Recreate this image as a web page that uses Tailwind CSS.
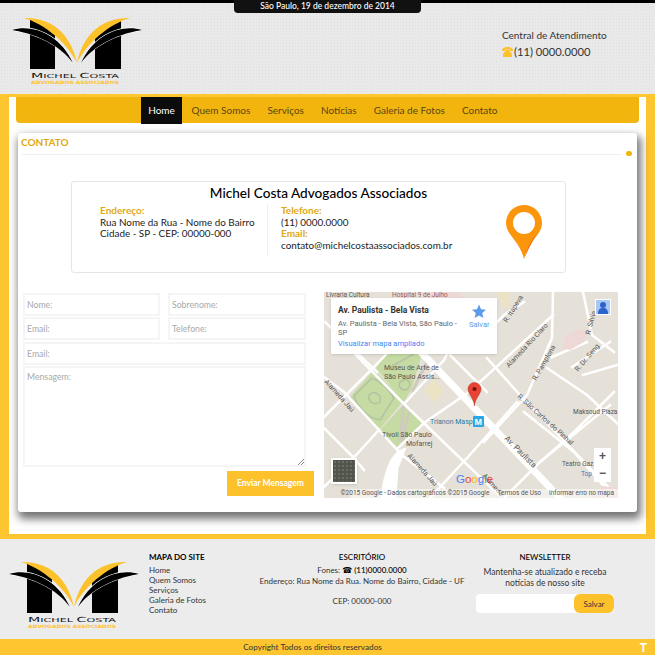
<!DOCTYPE html>
<html lang="pt-BR">
<head>
<meta charset="utf-8">
<title>Michel Costa Advogados Associados</title>
<script src="https://cdn.jsdelivr.net/npm/@tailwindcss/browser@4"></script>
</head>
<body class="m-0">
<div class="w-[655px] h-[655px] overflow-hidden font-['Lato',sans-serif] text-[#333] bg-white">

  <!-- Header -->
  <header class="relative h-[94px] bg-[#e9e9e9] bg-[radial-gradient(#e0e0e0_1px,transparent_1px)] bg-[size:3px_3px] border-t-[3px] border-black">
    <div class="absolute left-[234px] top-[-3px] w-[187px] h-[13px] bg-[#111] rounded-b-[4px] text-white text-[8.5px] font-medium leading-[12px] text-center">São Paulo, 19 de dezembro de 2014</div>
    <div class="flex justify-between">
      <svg class="ml-[12px] mt-[14px] w-[130px] h-[68px]" viewBox="0 0 130 68">
        <path d="M18 2 C28 4 37 10 43 17 V52 H18Z" fill="#000"/>
        <path d="M109 2 C99 4 90 10 83 17 V52 H109Z" fill="#000"/>
        <path d="M0 13 C20 7 48 17 61 46 C50 31 30 18 0 13Z" fill="#000" stroke="#fff" stroke-width="1.200"/>
        <path d="M130 13 C110 7 82 17 69 46 C80 31 100 18 130 13Z" fill="#000" stroke="#fff" stroke-width="1.200"/>
        <path d="M0 13 C20 7 48 17 61 46 C50 31 30 18 0 13Z" fill="#000"/>
        <path d="M130 13 C110 7 82 17 69 46 C80 31 100 18 130 13Z" fill="#000"/>
        <path d="M12 1 C44 0 60 22 65 46 C60 35 44 14 18 3Z" fill="#fdc12c"/>
        <path d="M118 1 C86 0 70 22 65 46 C70 35 86 14 112 3Z" fill="#fdc12c"/>
        <text x="19" y="61" font-family="DejaVu Sans" font-size="5.500" fill="#111" textLength="88" lengthAdjust="spacingAndGlyphs"><tspan font-size="7">M</tspan>ICHEL <tspan font-size="7">C</tspan>OSTA</text>
        <text x="19" y="67" font-family="DejaVu Sans" font-size="4.500" font-weight="700" fill="#fdc12c" textLength="88" lengthAdjust="spacingAndGlyphs">ADVOGADOS ASSOCIADOS</text>
      </svg>
      <div class="mr-[48px] mt-[26px] w-[105px]">
        <p class="text-[10px] leading-[12px] whitespace-nowrap">Central de Atendimento</p>
        <p class="mt-[3px] text-[11.2px] leading-[15px] whitespace-nowrap flex items-center">
          <svg class="w-[11px] h-[10px] mr-px" viewBox="0 0 11 10"><path d="M0 3.500 C0 1 3 0 5.500 0 C8 0 11 1 11 3.500 L11 4 L8 4 L8 2.500 L3 2.500 L3 4 L0 4Z M3 4.500 L4 3 L7 3 L8 4.500 L10 7 L10 10 L1 10 L1 7Z" fill="#fdc12c"/></svg>(11) 0000.0000</p>
      </div>
    </div>
  </header>

  <!-- Main -->
  <main class="bg-[#fdc530] pt-[3px] pb-[5px] px-[9px]">
    <div class="h-[437px] bg-white px-[7px] flex flex-col">
      <nav class="h-[26px] bg-[#f2b50e] rounded-b-[4px] flex pl-[125px] text-[10px] text-[#5a4510]">
        <a class="h-[27px] w-[41px] bg-[#0c0c0c] text-white flex items-center justify-center mr-[9.5px]">Home</a>
        <div class="flex gap-[17px] pt-px">
          <a class="flex items-center">Quem Somos</a>
          <a class="flex items-center">Serviços</a>
          <a class="flex items-center">Notícias</a>
          <a class="flex items-center">Galeria de Fotos</a>
          <a class="flex items-center">Contato</a>
        </div>
      </nav>

      <section class="mt-[10px] mx-[2px] h-[379px] bg-white rounded-[3px] shadow-[2px_5px_8px_2px_rgba(0,0,0,0.55)] relative px-[5px]">
        <div class="flex items-center h-[21px] pb-[4px] -ml-[2px] text-[10px] font-bold text-[#dfa90f] leading-[12px]">CONTATO</div>
        <div class="relative h-px bg-[#f0f0f0] -ml-px mr-[10px]">
          <span class="absolute right-[-10px] top-[-3px] w-[6px] h-[5px] rounded-full bg-[#f2b50e]"></span>
        </div>

        <!-- Info box -->
        <div class="mt-[26px] ml-[48px] w-[495px] h-[92px] border border-[#e6e6e6] rounded-[3px] relative">
          <h2 class="text-center text-[13.6px] leading-[20px] text-black font-medium pt-px">Michel Costa Advogados Associados</h2>
          <div class="flex mt-[1px] text-[9.9px] leading-[11.7px] text-[#222]">
            <div class="ml-[28px] w-[168px] h-[52px] border-r border-[#eeeeee] pt-px">
              <p class="text-[#dfa90f] font-bold text-[10px]">Endereço:</p>
              <p class="whitespace-nowrap">Rua Nome da Rua - Nome do Bairro</p>
              <p>Cidade - SP - CEP: 00000-000</p>
            </div>
            <div class="ml-[13px] pt-px">
              <p class="text-[#dfa90f] font-bold text-[10px]">Telefone:</p>
              <p>(11) 0000.0000</p>
              <p class="text-[#dfa90f] font-bold text-[10px]">Email:</p>
              <p>contato@michelcostaassociados.com.br</p>
            </div>
          </div>
          <svg class="absolute left-[434px] top-[23px] w-[36px] h-[54px]" viewBox="0 0 36 54">
            <path d="M18 0 C8 0 0 8 0 18 C0 30 14 36 18 54 C22 36 36 30 36 18 C36 8 28 0 18 0Z" fill="#fb950c"/>
            <path d="M32 26 C28 34 22 38 18 54 C22 44 27 36 32 26Z" fill="#f26b0a"/>
            <circle cx="18" cy="18" r="11" fill="#fff"/>
          </svg>
        </div>

        <!-- Form + map -->
        <div class="flex mt-[20px]">
          <form class="w-[291px] relative text-[8.7px] text-[#a9a9a9]">
            <div class="flex gap-[8px] mb-px">
              <div class="w-[137px] h-[23px] border-2 border-[#f5f5f5] flex items-center pl-[2px]">Nome:</div>
              <div class="w-[138px] h-[23px] border-2 border-[#f5f5f5] flex items-center pl-[2px]">Sobrenome:</div>
            </div>
            <div class="flex gap-[8px] mb-[2px]">
              <div class="w-[137px] h-[23px] border-2 border-[#f5f5f5] flex items-center pl-[2px]">Email:</div>
              <div class="w-[138px] h-[23px] border-2 border-[#f5f5f5] flex items-center pl-[2px]">Telefone:</div>
            </div>
            <div class="w-[283px] h-[23px] border-2 border-[#f5f5f5] flex items-center pl-[2px] mb-px">Email:</div>
            <div class="relative w-[283px] h-[101px] border-2 border-[#f5f5f5] pl-[2px] pt-[2px]">Mensagem:
              <svg class="absolute right-0 bottom-0 w-[6px] h-[6px]" viewBox="0 0 6 6"><path d="M0 6 L6 0 M3 6 L6 3" stroke="#888" stroke-width="1"/></svg>
            </div>
            <button type="button" class="block mt-[4px] ml-[204px] w-[87px] h-[25px] bg-[#fdc12c] text-white text-[8.5px] font-bold">Enviar Mensagem</button>
          </form>

          <!-- Map -->
          <div class="relative ml-[10px] -mt-px w-[294px] h-[206px] overflow-hidden bg-[#e8e3da]">
            <svg class="absolute inset-0" width="294" height="206" viewBox="0 0 294 206">
              <rect width="294" height="206" fill="#e6e1d8"/>
              <path d="M50 78 L80 108 L55 138 L25 106Z" fill="#c5dba3"/>
              <path d="M62 62 L98 62 L88 96 L80 110 L52 76Z" fill="#c5dba3"/>
              <path d="M80 112 L100 131 L74 156 L56 138Z" fill="#c5dba3"/>
              <path d="M110 88 L120 100 L110 110 L100 98Z" fill="#ece3c5"/>
              <g stroke="#b5c2a3" stroke-width="1.600" fill="none">
                <path d="M30 104 L48 86 C58 90 64 96 70 106 L56 128 C44 126 34 116 30 104Z"/>
                <path d="M45 103 C50 98 58 102 56 110 C50 114 44 110 45 103Z"/>
                <path d="M68 74 L90 62 M76 90 C84 84 90 92 82 98 C76 98 74 94 76 90Z"/>
              </g>
              <g stroke="#cfcabd" stroke-width="3" fill="none">
                <path d="M80 110 L76 150 M86 116 L78 150"/>
                <path d="M88 100 L104 68"/>
              </g>
              <g stroke="#fff" fill="none" stroke-linecap="square">
                <path d="M94 57 L236 206" stroke-width="7"/>
                <g stroke-width="2.500">
                  <path d="M0 125 L50 75 L72 52"/>
                  <path d="M30 61 L80 112 L133 163 L176 204"/>
                  <path d="M1 30 L53 80"/>
                  <path d="M0 85 L20 100 L78 163 L120 196"/>
                  <path d="M0 136 L30 166 L40 178"/>
                  <path d="M80 112 L120 68 L124 60"/>
                  <path d="M55 138 L33 162 L0 195"/>
                  <path d="M229 23 L145 100 L100 131 L74 156"/>
                  <path d="M193 110 L143 166 L118 193 L106 206"/>
                  <path d="M286 113 L216 170 L180 206"/>
                  <path d="M126 63 L163 100"/>
                  <path d="M163 66 L196 103 L289 200"/>
                  <path d="M223 76 L263 103 L294 132"/>
                  <path d="M229 0 L228 46 L203 103 L160 150"/>
                  <path d="M259 0 L268 43 L290 60"/>
                  <path d="M248 75 L286 50"/>
                  <path d="M259 83 L293 73"/>
                  <path d="M228 65 L263 50"/>
                  <path d="M200 10 L180 23 L145 60"/>
                  <path d="M200 120 L250 160 L290 206"/>
                  <path d="M290 100 L250 140 L216 170"/>
                </g>
                <path d="M56 206 C62 176 66 160 82 156 L74 176 L72 206Z" fill="#fff" stroke-width="1"/>
              </g>
              <path d="M173 0 L186 0 L186 16 L178 14Z" fill="#ece3c5"/>
              <path d="M242 44 L256 36 L264 40 L260 50 L246 58 L238 56Z" fill="#eed8d6"/>
              <path d="M104 10 L140 10 L136 0 L104 0Z" fill="#eed8d6"/>
              <path d="M270 206 L278 194 L294 196 V206Z" fill="#eed8d6"/>
              <g font-family="Roboto,Liberation Sans,sans-serif" fill="#555" font-size="7">
                <text x="60" y="78">Museu de Arte de</text>
                <text x="60" y="87">São Paulo Assis...</text>
                <text x="58" y="145">Tivoli São Paulo</text>
                <text x="82" y="154">Mofarrej</text>
                <text x="249" y="122" font-size="6.500">Maksoud Plaza</text>
                <text x="238" y="174" font-size="6.500">Teatro Gaz</text>
                <text x="257" y="184" font-size="6.500" fill="#1a7fc0">Top</text>
                <text x="106" y="132" fill="#2b7a9e" font-size="7">Trianon Masp</text>
                <text x="68" y="5" font-size="6.500" fill="#a0555a">Hospital 9 de Julho</text>
                <text x="2" y="5" font-size="6.500">Livraria Cultura</text>
                <text transform="translate(185,76) rotate(-47)" font-size="7">Alameda Rio Claro</text>
                <text transform="translate(212,89) rotate(-60)" font-size="7">R. Pamplona</text>
                <text transform="translate(254,80) rotate(-50)" font-size="7">R. Dr. Seng</text>
                <text transform="translate(183,31) rotate(-58)" font-size="7">R. Itapeva</text>
                <text transform="translate(266,43) rotate(-75)" font-size="7">R. Silvia</text>
                <text transform="translate(193,105) rotate(42)" font-size="7">R. São Carlos do Pinhal</text>
                <text transform="translate(180,147) rotate(45)" font-size="8">Av. Paulista</text>
                <text transform="translate(83,164) rotate(48)" font-size="7">Alameda Jaú</text>
                <text transform="translate(0,90) rotate(48)" font-size="7">Alameda Jaú</text>
                <text transform="translate(158,184) rotate(48)" font-size="7">Alameda</text>
              </g>
              <rect x="149" y="124" width="11" height="11" rx="1" fill="#2aa7e8"/>
              <text x="150.500" y="133" font-family="Liberation Sans" font-size="9" font-weight="700" fill="#fff">M</text>
              <path d="M150.500 114 C150 106 144 102 144 97 A6.500 6.500 0 1 1 157 97 C157 102 151 106 150.500 114Z" fill="#ea4335" stroke="#b03028" stroke-width=".5"/>
              <circle cx="150.500" cy="97" r="2" fill="#6b1410"/>
              <text x="132" y="191" font-family="Liberation Sans" font-size="11.500" fill="#4285f4">G<tspan fill="#ea4335">o</tspan><tspan fill="#fbbc05">o</tspan><tspan fill="#4285f4">g</tspan><tspan fill="#34a853">l</tspan><tspan fill="#ea4335">e</tspan></text>
            </svg>
            <div class="absolute left-[7px] top-[6px] w-[166px] h-[56px] bg-white shadow-sm">
              <p class="absolute left-[7px] top-[7px] text-[8.5px] leading-[10px] font-['Roboto'] font-bold text-[#333]">Av. Paulista - Bela Vista</p>
              <p class="absolute left-[7px] top-[21px] w-[125px] text-[7.5px] leading-[9px] font-['Roboto'] text-[#666]">Av. Paulista - Bela Vista, São Paulo - SP</p>
              <p class="absolute left-[7px] top-[41px] text-[7.5px] leading-[10px] font-['Roboto'] text-[#4285f4]">Visualizar mapa ampliado</p>
              <svg class="absolute left-[141px] top-[6px] w-[14px] h-[14px]" viewBox="0 0 24 24"><path d="M12 1 L15.500 9 L24 9.800 L17.500 15.500 L19.500 24 L12 19.500 L4.500 24 L6.500 15.500 L0 9.800 L8.500 9Z" fill="#5b9be8"/></svg>
              <p class="absolute left-[138px] top-[22px] text-[7.5px] leading-[10px] font-['Roboto'] text-[#5b9be8]">Salvar</p>
            </div>
            <div class="absolute left-[271px] top-[7px] w-[16px] h-[16px] bg-[#a9c7f5] border border-white flex items-end justify-center overflow-hidden">
              <svg class="w-[12px] h-[13px]" viewBox="0 0 12 13"><circle cx="6" cy="4" r="3" fill="#2b63c9"/><path d="M1 13 C1 8 3 7 6 7 C9 7 11 8 11 13Z" fill="#2b63c9"/></svg>
            </div>
            <div class="absolute left-[270px] top-[156px] w-[17px] h-[34px] bg-white text-[#555] flex flex-col items-center text-[12px] leading-[17px] font-bold font-['Liberation_Sans']">
              <span>+</span><span>−</span>
            </div>
            <div class="absolute left-[7px] top-[166px] w-[26px] h-[26px] bg-[#50544a] border-2 border-white shadow-sm bg-[radial-gradient(#6b6f63_1px,transparent_1.500px)] bg-[size:4px_4px]"></div>
            <div class="absolute right-0 bottom-0 h-[9px] w-[268px] bg-white/50 text-[6.5px] leading-[9px] text-[#555] font-['Roboto'] flex justify-end gap-[8px] pr-[4px] whitespace-nowrap">
              <span>©2015 Google - Dados cartográficos ©2015 Google</span><span>Termos de Uso</span><span>Informar erro no mapa</span>
            </div>
          </div>
        </div>
      </section>
    </div>
  </main>

  <!-- Footer -->
  <footer class="h-[100px] bg-[#ececec] relative flex text-[8px] leading-[10px] text-[#333]">
    <svg class="ml-[9px] mt-[22px] w-[130px] h-[68px] shrink-0" viewBox="0 0 130 68">
      <path d="M18 2 C28 4 37 10 43 17 V52 H18Z" fill="#000"/>
      <path d="M109 2 C99 4 90 10 83 17 V52 H109Z" fill="#000"/>
      <path d="M0 13 C20 7 48 17 61 46 C50 31 30 18 0 13Z" fill="#000" stroke="#fff" stroke-width="1.200"/>
      <path d="M130 13 C110 7 82 17 69 46 C80 31 100 18 130 13Z" fill="#000" stroke="#fff" stroke-width="1.200"/>
      <path d="M0 13 C20 7 48 17 61 46 C50 31 30 18 0 13Z" fill="#000"/>
      <path d="M130 13 C110 7 82 17 69 46 C80 31 100 18 130 13Z" fill="#000"/>
      <path d="M12 1 C44 0 60 22 65 46 C60 35 44 14 18 3Z" fill="#fdc12c"/>
      <path d="M118 1 C86 0 70 22 65 46 C70 35 86 14 112 3Z" fill="#fdc12c"/>
      <text x="19" y="61" font-family="DejaVu Sans" font-size="5.500" fill="#111" textLength="88" lengthAdjust="spacingAndGlyphs"><tspan font-size="7">M</tspan>ICHEL <tspan font-size="7">C</tspan>OSTA</text>
      <text x="19" y="67" font-family="DejaVu Sans" font-size="4.500" font-weight="700" fill="#fdc12c" textLength="88" lengthAdjust="spacingAndGlyphs">ADVOGADOS ASSOCIADOS</text>
    </svg>
    <div class="ml-[10px] pt-[13px] w-[100px]">
      <h3 class="font-bold text-black mb-[3px] leading-[10px]">MAPA DO SITE</h3>
      <ul>
        <li>Home</li><li>Quem Somos</li><li>Serviços</li><li>Galeria de Fotos</li><li>Contato</li>
      </ul>
    </div>
    <div class="pt-[13px] w-[226px] text-center">
      <h3 class="font-medium text-black mb-[3px]">ESCRITÓRIO</h3>
      <p>Fones: <span class="font-['DejaVu_Sans'] text-black">☎</span> <span class="font-medium text-black">(11)0000.0000</span></p>
      <p class="whitespace-nowrap">Endereço: Rua Nome da Rua. Nome do Bairro, Cidade - UF</p>
      <p class="mt-[10px]">CEP: 00000-000</p>
    </div>
    <div class="ml-[1px] pt-[13px] w-[138px] flex flex-col items-center text-center">
      <h3 class="font-medium text-black mb-[5px]">NEWSLETTER</h3>
      <p class="leading-[10.500px] w-[125px] text-[8.5px]">Mantenha-se atualizado e receba notícias de nosso site</p>
      <div class="mt-[6px] w-[138px] h-[19px] flex bg-white rounded-[4px]">
        <div class="flex-1"></div>
        <button type="button" class="w-[40px] h-[19px] bg-[#fdc12c] rounded-[6px] text-[8px] text-[#333]">Salvar</button>
      </div>
    </div>
  </footer>
  <div class="h-[16px] bg-[#fdc530] relative text-center text-[8.2px] leading-[17px] text-[#333] pr-[30px]">
    Copyright Todos os direitos reservados
    <span class="absolute right-[8px] top-0 text-white font-bold text-[12px] leading-[19px] font-['Liberation_Sans']">T</span>
  </div>
</div>
</body>
</html>
